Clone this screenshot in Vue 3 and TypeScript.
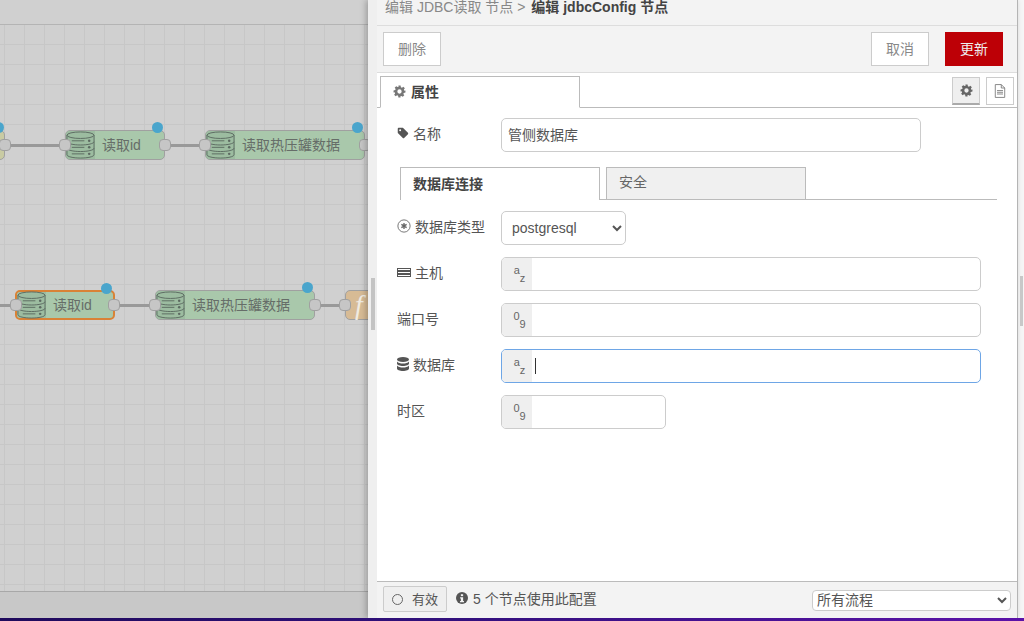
<script setup lang="ts">
interface CanvasNode {
  id: string
  label: string
  x: number
  y: number
  width: number
  selected?: boolean
}

interface Wire {
  id: string
  x: number
  y: number
  width: number
}

interface FieldRow {
  label: string
  icon: string
  type: string
  short?: boolean
  focused?: boolean
}

const nodes: CanvasNode[] = [
  { id: 'a1', label: '读取id', x: 65, y: 105, width: 100 },
  { id: 'a2', label: '读取热压罐数据', x: 205, y: 105, width: 160 },
  { id: 'b1', label: '读取id', x: 15, y: 265, width: 100, selected: true },
  { id: 'b2', label: '读取热压罐数据', x: 155, y: 265, width: 160 },
]

const wires: Wire[] = [
  { id: 'w1', x: 4, y: 119, width: 62 },
  { id: 'w2', x: 165, y: 119, width: 40 },
  { id: 'w3', x: 0, y: 279, width: 15 },
  { id: 'w4', x: 115, y: 279, width: 40 },
  { id: 'w5', x: 315, y: 279, width: 30 },
]

const fields: FieldRow[] = [
  { label: '主机', icon: 'server', type: 'az' },
  { label: '端口号', icon: '', type: '09' },
  { label: '数据库', icon: 'database', type: 'az', focused: true },
  { label: '时区', icon: '', type: '09', short: true },
]

const gearPath =
  'M10 1h4l.6 3.1 1.9.8 2.6-1.8 2.8 2.8-1.8 2.6.8 1.9L23 10v4l-3.1.6-.8 1.9 1.8 2.6-2.8 2.8-2.6-1.8-1.9.8L14 23h-4l-.6-3.1-1.9-.8-2.6 1.8-2.8-2.8 1.8-2.6-.8-1.9L1 14v-4l3.1-.6.8-1.9-1.8-2.6 2.8-2.8 2.6 1.8 1.9-.8zM12 8a4 4 0 1 0 0 8 4 4 0 0 0 0-8z'
</script>

<template>
  <div class="screen">
    <div class="workspace">
      <div class="canvas">
        <div v-for="w in wires" :key="w.id" class="wire" :style="{ left: w.x + 'px', top: w.y + 'px', width: w.width + 'px' }"></div>

        <div class="stub-node"><span class="port stub-port"></span><span class="dot stub-dot"></span></div>

        <div
          v-for="n in nodes"
          :key="n.id"
          class="node"
          :class="{ selected: n.selected }"
          :style="{ left: n.x + 'px', top: n.y + 'px', width: n.width + 'px' }"
        >
          <span class="node-icon">
            <svg viewBox="0 0 30 30" width="29" height="28" preserveAspectRatio="none" fill="none" stroke="#5c6a61" stroke-width="1">
              <ellipse cx="15" cy="4.5" rx="14" ry="3.5" />
              <path d="M1 4.500v21c0 1.900 6.300 3.500 14 3.500s14-1.600 14-3.500v-21" />
              <path d="M1 11.500c0 1.900 6.300 3.500 14 3.500s14-1.600 14-3.500M1 18.500c0 1.900 6.300 3.500 14 3.500s14-1.600 14-3.500" />
              <path d="M6 10.500h13M6 17.500h13M6 24.500h13" />
              <circle cx="24" cy="10.500" r="1.300" fill="#5c6a61" stroke="none" />
              <circle cx="24" cy="17.500" r="1.300" fill="#5c6a61" stroke="none" />
              <circle cx="24" cy="24.500" r="1.300" fill="#5c6a61" stroke="none" />
            </svg>
          </span>
          <span class="node-label">{{ n.label }}</span>
          <span class="port port-in"></span>
          <span class="port port-out"></span>
          <span class="dot"></span>
        </div>

        <div class="fn-node">
          <span class="fn-mark">f</span>
          <span class="port fn-port"></span>
        </div>
      </div>
      <div class="canvas-footer"></div>
    </div>

    <aside class="tray">
      <div class="crumbs">
        <span>编辑 JDBC读取 节点 &gt; </span><b>编辑 jdbcConfig 节点</b>
      </div>

      <div class="actions">
        <button class="btn">删除</button>
        <span class="spacer"></span>
        <button class="btn">取消</button>
        <button class="btn primary">更新</button>
      </div>

      <div class="tabbar">
        <div class="main-tab">
          <svg class="ico" viewBox="0 0 24 24" width="13" height="13" fill="#777">
            <path fill-rule="evenodd" :d="gearPath" />
          </svg>
          <b>属性</b>
        </div>
        <div class="tab-tools">
          <span class="tool active">
            <svg viewBox="0 0 24 24" width="13" height="13" fill="#666">
              <path fill-rule="evenodd" :d="gearPath" />
            </svg>
          </span>
          <span class="tool">
            <svg viewBox="0 0 14 16" width="12" height="14" fill="none" stroke="#777" stroke-width="1">
              <path d="M1.500.5h7l4 4v11h-11zM8.500.5v4h4M3.500 7.500h7M3.500 9.500h7M3.500 11.500h7" />
            </svg>
          </span>
        </div>
      </div>

      <div class="body">
        <div class="row name-row">
          <label class="lbl">
            <svg class="ico" viewBox="0 0 16 16" width="12" height="12" fill="#555">
              <path fill-rule="evenodd" d="M1 2.200C1 1.500 1.500 1 2.200 1h5c.4 0 .7.1 1 .4l6.400 6.400c.5.5.5 1.200 0 1.700l-5.100 5.100c-.5.5-1.200.5-1.700 0L1.400 8.200c-.3-.3-.4-.6-.4-1zM4.200 5.500a1.300 1.300 0 1 0 0-2.600 1.300 1.300 0 0 0 0 2.600z" />
            </svg>
            名称
          </label>
          <input class="text-input" type="text" value="管侧数据库" />
        </div>

        <div class="sub-tabs">
          <div class="sub-tab on">数据库连接</div>
          <div class="sub-tab">安全</div>
        </div>

        <div class="row">
          <label class="lbl">
            <svg class="ico" viewBox="0 0 16 16" width="14" height="14" fill="none" stroke="#666" stroke-width="1">
              <circle cx="8" cy="8" r="7" />
              <path d="M8 4.500v7M5 6.200l6 3.600M11 6.200l-6 3.600" stroke-width="1.500" />
            </svg>
            数据库类型
          </label>
          <select class="type-select">
            <option>postgresql</option>
          </select>
        </div>

        <div v-for="f in fields" :key="f.label" class="row">
          <label class="lbl">
            <svg v-if="f.icon === 'server'" class="ico server-ico" viewBox="0 0 14 10" width="14" height="10" fill="none" stroke="#555" stroke-width="1">
              <rect x=".5" y=".5" width="13" height="2" />
              <rect x=".5" y="3.500" width="13" height="2" />
              <rect x=".5" y="6.500" width="13" height="2" />
            </svg>
            <svg v-else-if="f.icon === 'database'" class="ico" viewBox="0 0 12 14" width="12" height="14" fill="#555">
              <ellipse cx="6" cy="2.500" rx="6" ry="2.500" />
              <path d="M0 4.500c1 1.500 3.500 2 6 2s5-.5 6-2v2c0 1.400-2.700 2.500-6 2.500S0 7.900 0 6.500zM0 8.500c1 1.500 3.500 2 6 2s5-.5 6-2v3C12 12.900 9.300 14 6 14s-6-1.100-6-2.500z" />
            </svg>
            {{ f.label }}
          </label>
          <div class="typed" :class="{ short: f.short, focused: f.focused }">
            <span class="type-tag"><i>{{ f.type[0] }}</i><i class="low">{{ f.type[1] }}</i></span>
            <span class="typed-value"><span v-if="f.focused" class="caret"></span></span>
          </div>
        </div>
      </div>

      <div class="tray-footer">
        <button class="toggle"><span class="ring"></span>有效</button>
        <span class="usage">
          <svg class="ico" viewBox="0 0 16 16" width="12" height="12">
            <circle cx="8" cy="8" r="8" fill="#555" />
            <rect x="6.500" y="3" width="3" height="2.500" fill="#f3f3f3" />
            <path d="M5.500 7h4v5h1.200v1.500H5.300V12h1.200V8.500h-1z" fill="#f3f3f3" />
          </svg>
          5 个节点使用此配置
        </span>
        <span class="spacer"></span>
        <select class="scope-select">
          <option>所有流程</option>
        </select>
      </div>
    </aside>
    <div class="tray-handle"></div>
    <div class="scroll-thumb"></div>
    <div class="dock-bar"></div>
  </div>
</template>

<style>
html, body {
  margin: 0;
  padding: 0;
  overflow: hidden;
}
</style>

<style scoped>
* {
  box-sizing: border-box;
}

.screen {
  position: relative;
  display: flex;
  width: 1024px;
  height: 621px;
  overflow: hidden;
  background: #f6f6f6;
  font-family: "Liberation Sans", "Noto Sans CJK SC", sans-serif;
  font-size: 14px;
  color: #555;
}

/* dimmed flow editor */
.workspace {
  width: 368px;
  flex-shrink: 0;
  padding-top: 24px;
  background: #d0d0d0;
}

.canvas {
  position: relative;
  height: 567px;
  border-top: 1px solid #b4b4b4;
  overflow: hidden;
  background-color: #d0d0d0;
  background-image:
    linear-gradient(#c7c7c7 1px, transparent 1px),
    linear-gradient(90deg, #c7c7c7 1px, transparent 1px);
  background-size: 20px 20px;
  background-position: 4px 19px;
}

.canvas-footer {
  height: 30px;
  border-top: 1px solid #a8a8a8;
  background: #c8c8c8;
}

.wire {
  position: absolute;
  height: 3px;
  background: #999;
}

.node {
  position: absolute;
  display: flex;
  align-items: center;
  height: 30px;
  border: 1.5px solid #a0a0a0;
  border-radius: 5px;
  background: #a9c8ab;
}

.node.selected {
  border: 2px solid #d98236;
}

.node-icon {
  display: flex;
  align-items: center;
  justify-content: center;
  width: 29px;
  height: 100%;
  flex-shrink: 0;
  background: #9cbca0;
  border-radius: 4px 0 0 4px;
}

.node-label {
  flex: 1;
  padding: 0 0 2px 7px;
  font-size: 14px;
  color: #666d68;
  white-space: nowrap;
}

.port {
  position: absolute;
  top: 50%;
  width: 12px;
  height: 12px;
  margin-top: -6px;
  border: 1px solid #a0a0a0;
  border-radius: 4px;
  background: #c6c6c6;
}

.port-in {
  left: -7px;
}

.port-out {
  right: -7px;
}

.dot {
  position: absolute;
  top: -9px;
  right: 1px;
  width: 11px;
  height: 11px;
  border-radius: 50%;
  background: #4aa5cc;
}

.stub-node {
  position: absolute;
  left: -20px;
  top: 105px;
  width: 25px;
  height: 30px;
  border: 1.5px solid #a0a0a0;
  border-radius: 5px;
  background: #c9cba3;
}

.stub-port {
  right: -7px;
}

.stub-dot {
  right: 0;
}

.fn-node {
  position: absolute;
  left: 345px;
  top: 265px;
  width: 40px;
  height: 30px;
  border: 1.5px solid #a0a0a0;
  border-radius: 5px;
  background: #d7bb95;
}

.fn-mark {
  position: absolute;
  left: 9px;
  top: 0;
  font-family: "Liberation Serif", serif;
  font-style: italic;
  font-size: 28px;
  line-height: 27px;
  color: #f0ebe2;
}

.fn-port {
  left: -7px;
}

/* edit tray */
.tray {
  position: relative;
  display: flex;
  flex-direction: column;
  width: 650px;
  height: 618px;
  flex-shrink: 0;
  border-left: 9px solid #efefef;
  border-right: 1px solid #b4b4b4;
  background: #fff;
  box-shadow: -2px 0 6px rgba(0, 0, 0, 0.25);
}

.tray-handle {
  position: absolute;
  left: 371px;
  top: 278px;
  width: 4px;
  height: 52px;
  background: #c4c4c4;
}

.crumbs {
  height: 26px;
  padding-left: 8px;
  background: #f3f3f3;
  border-bottom: 1px solid #ddd;
  line-height: 14px;
  color: #888;
  font-size: 14px;
  white-space: nowrap;
  flex-shrink: 0;
}

.crumbs b {
  margin-left: 2px;
  color: #444;
}

.actions {
  display: flex;
  align-items: center;
  gap: 16px;
  height: 47px;
  padding: 0 14px 0 6px;
  background: #f3f3f3;
  border-bottom: 1px solid #ddd;
  flex-shrink: 0;
}

.spacer {
  flex: 1;
}

.btn {
  width: 58px;
  height: 34px;
  padding: 0 0 2px;
  border: 1px solid #ccc;
  background: #fff;
  color: #888;
  font: inherit;
}

.btn.primary {
  border-color: #bd0006;
  background: #bd0006;
  color: #eee;
}

.tabbar {
  display: flex;
  align-items: flex-end;
  justify-content: space-between;
  height: 35px;
  padding: 0 3px 0 3px;
  border-bottom: 1px solid #bbb;
  flex-shrink: 0;
}

.main-tab {
  display: flex;
  align-items: center;
  gap: 5px;
  width: 200px;
  height: 32px;
  margin-bottom: -1px;
  padding: 0 0 2px 12px;
  border: 1px solid #bbb;
  border-bottom-color: #fff;
  background: #fff;
  color: #444;
  font-size: 14px;
}

.tab-tools {
  display: flex;
  gap: 6px;
  align-self: flex-start;
  margin-top: 4px;
}

.tool {
  display: flex;
  align-items: center;
  justify-content: center;
  width: 28px;
  height: 28px;
  border: 1px solid #ccc;
  background: #fff;
}

.tool.active {
  background: #efefef;
  border-bottom: 2px solid #aaa;
}

.ico {
  flex-shrink: 0;
}

.server-ico {
  margin-top: 2px;
}

.body {
  flex: 1;
  min-height: 0;
  padding: 10px 20px 0;
}

.row {
  display: flex;
  align-items: center;
  min-height: 34px;
  margin-bottom: 12px;
}

.name-row {
  margin-bottom: 16px;
}

.lbl {
  display: flex;
  align-items: center;
  gap: 4px;
  width: 104px;
  padding-bottom: 4px;
  flex-shrink: 0;
  color: #555;
  font-size: 14px;
  white-space: nowrap;
}

.text-input {
  width: 420px;
  height: 34px;
  padding: 0 6px 3px;
  border: 1px solid #ccc;
  border-radius: 5px;
  outline: none;
  background: #fff;
  color: #555;
  font: inherit;
}

.sub-tabs {
  display: flex;
  gap: 6px;
  align-items: flex-end;
  height: 32px;
  margin: 0 0 11px 3px;
  border-bottom: 1px solid #bbb;
}

.sub-tab {
  display: flex;
  align-items: center;
  width: 200px;
  height: 32px;
  padding: 0 0 5px 12px;
  border: 1px solid #bbb;
  border-bottom: none;
  background: #f0f0f0;
  color: #666;
}

.sub-tab.on {
  height: 33px;
  margin-bottom: -1px;
  padding-bottom: 3px;
  background: #fff;
  color: #444;
  font-weight: 700;
}

.type-select {
  width: 125px;
  height: 34px;
  padding-left: 6px;
  border: 1px solid #ccc;
  border-radius: 5px;
  background: #fff;
  color: #555;
  font: inherit;
}

.typed {
  display: flex;
  width: 480px;
  height: 34px;
  border: 1px solid #ccc;
  border-radius: 5px;
  overflow: hidden;
}

.typed.short {
  width: 165px;
}

.typed.focused {
  border-color: #6ea6e6;
}

.type-tag {
  display: flex;
  align-items: center;
  justify-content: center;
  width: 30px;
  padding-left: 5px;
  background: #efefef;
  color: #666;
  font-size: 11px;
}

.type-tag i {
  font-style: normal;
  transform: translateY(-4px);
}

.type-tag i.low {
  transform: translateY(4px);
}

.typed-value {
  display: flex;
  align-items: center;
  flex: 1;
  padding-left: 3px;
}

.caret {
  width: 1px;
  height: 16px;
  background: #333;
}

.tray-footer {
  display: flex;
  align-items: center;
  gap: 9px;
  height: 37px;
  padding: 0 6px 2px 6px;
  border-top: 1px solid #bbb;
  background: #f3f3f3;
  flex-shrink: 0;
}

.toggle {
  display: flex;
  align-items: center;
  gap: 9px;
  width: 64px;
  height: 26px;
  padding: 0 0 2px 8px;
  border: 1px solid #ccc;
  border-radius: 2px;
  background: #efefef;
  color: #555;
  font: inherit;
  font-size: 13px;
}

.ring {
  width: 11px;
  height: 11px;
  margin-top: 2px;
  border: 1px solid #666;
  border-radius: 50%;
}

.usage {
  display: flex;
  align-items: center;
  gap: 5px;
  padding-bottom: 2px;
  color: #555;
  font-size: 14px;
}

.scope-select {
  width: 199px;
  height: 21px;
  margin-top: 2px;
  border: 1px solid #ccc;
  border-radius: 4px;
  background: #fff;
  color: #555;
  font: inherit;
}

.scroll-thumb {
  position: absolute;
  left: 1020px;
  top: 276px;
  width: 3px;
  height: 50px;
  background: #c8c8c8;
}

.dock-bar {
  position: absolute;
  left: 0;
  right: 0;
  bottom: 0;
  height: 3px;
  background: linear-gradient(90deg, #1f0a5c, #30107a 40%, #5b12a8);
}
</style>
